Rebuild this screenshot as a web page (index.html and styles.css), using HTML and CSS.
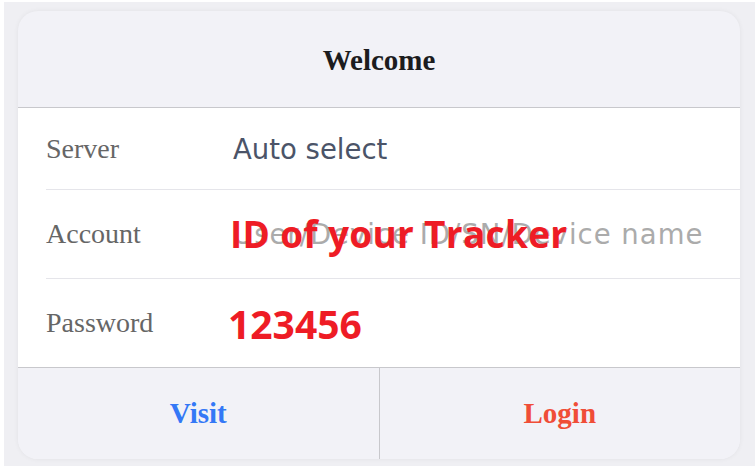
FILE: index.html
```html
<!DOCTYPE html>
<html lang="en">
<head>
<meta charset="utf-8">
<title>Welcome</title>
<link rel="stylesheet" href="styles.css">
</head>
<body>
<div class="page">
  <div class="card">
    <div class="card-header">Welcome</div>
    <div class="form">
      <div class="row row-server">
        <div class="label">Server</div>
        <div class="value value-text">Auto select</div>
      </div>
      <div class="row row-account">
        <div class="label">Account</div>
        <div class="value">
          <input class="field" type="text" placeholder="User/Device ID/SN/Device name">
          <span class="note note-id">ID of your Tracker</span>
        </div>
      </div>
      <div class="row row-password">
        <div class="label">Password</div>
        <div class="value">
          <input class="field" type="password">
          <span class="note note-pw">123456</span>
        </div>
      </div>
    </div>
    <div class="card-footer">
      <button class="btn btn-visit" type="button">Visit</button>
      <button class="btn btn-login" type="button">Login</button>
    </div>
  </div>
</div>
</body>
</html>
```
FILE: styles.css
```css
html, body {
  margin: 0;
  padding: 0;
  background: #ffffff;
  width: 755px;
  height: 466px;
  overflow: hidden;
}

.page {
  margin: 2px 0 0 4px;
  height: 464px;
  background: #efeff3;
  padding: 9px 15px 0 14px;
  box-sizing: border-box;
}

.card {
  width: 722px;
  height: 448px;
  border-radius: 20px;
  overflow: hidden;
  background: #f2f2f7;
  box-shadow: 0 0 5px rgba(0, 0, 0, 0.06);
  display: flex;
  flex-direction: column;
}

.card-header {
  height: 97px;
  flex: none;
  display: flex;
  align-items: center;
  justify-content: center;
  font-family: "Liberation Serif", "Times New Roman", serif;
  font-weight: bold;
  font-size: 29px;
  color: #1c1c1e;
  border-bottom: 1px solid #c8c8cc;
  padding-top: 2px;
  box-sizing: border-box;
}

.form {
  background: #ffffff;
  padding-left: 28px;
  flex: none;
}

.row {
  display: flex;
  align-items: center;
  border-bottom: 1px solid #e5e5ea;
  box-sizing: border-box;
}

.row-server { height: 82px; }
.row-account { height: 89px; }
.row-password { height: 88px; border-bottom: none; }

.label {
  width: 187px;
  flex: none;
  font-family: "Liberation Serif", "Times New Roman", serif;
  font-size: 28px;
  color: #666666;
}

.value {
  flex: 1;
  position: relative;
  display: flex;
  align-items: center;
}

.value-text {
  font-family: "DejaVu Sans", Verdana, sans-serif;
  font-size: 27.5px;
  color: #4b5468;
}

.field {
  border: none;
  outline: none;
  background: transparent;
  padding: 0;
  margin: 0;
  width: 100%;
  font-family: "DejaVu Sans", Verdana, sans-serif;
  font-size: 27.5px;
  color: #333333;
}

.field::placeholder {
  color: #ababab;
  letter-spacing: 1px;
}

.note {
  position: absolute;
  left: -3px;
  font-family: "Open Sans", "Noto Sans", sans-serif;
  font-weight: bold;
  color: #ee1c25;
  white-space: nowrap;
  line-height: 1;
}

.note-id {
  font-size: 37px;
  letter-spacing: 0.3px;
  top: -3px;
}

.note-pw {
  font-size: 39px;
  left: -5px;
  top: -3px;
}

.card-footer {
  flex: 1;
  display: flex;
  border-top: 1px solid #c8c8cc;
  background: #f2f2f7;
}

.btn {
  flex: 1;
  border: none;
  background: transparent;
  margin: 0;
  padding: 0;
  font-family: "Liberation Serif", "Times New Roman", serif;
  font-weight: bold;
  font-size: 29px;
  cursor: pointer;
}

.btn-visit {
  color: #3478f6;
  border-right: 1px solid #c8c8cc;
}

.btn-login {
  color: #f04d37;
}
```
